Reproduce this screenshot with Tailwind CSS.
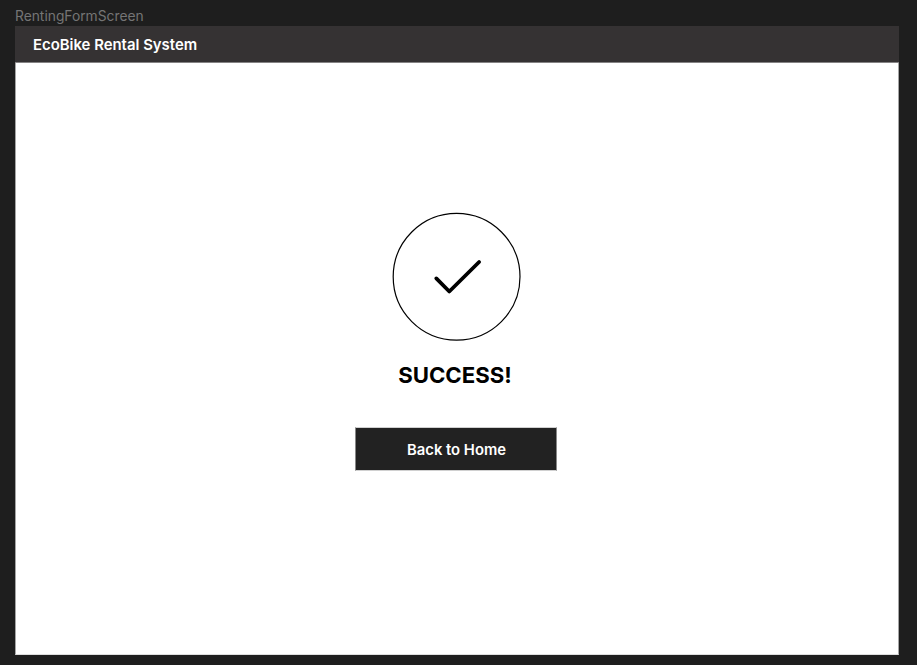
<!DOCTYPE html>
<html lang="en">
<head>
<meta charset="utf-8">
<title>EcoBike Rental System</title>
<script src="https://cdn.jsdelivr.net/npm/@tailwindcss/browser@4"></script>
</head>
<body class="h-[665px] w-[917px] overflow-hidden bg-[#1e1e1e] pl-[15px] font-['Inter',sans-serif]">
<div class="flex h-[26px] items-end pb-[1px] text-[13.8px] leading-[18px] text-[#757575]">RentingFormScreen</div>
<main class="flex h-[629px] w-[884px] flex-col bg-white">
<header class="flex h-[37px] shrink-0 items-center border-b border-[#858384] bg-[#353233] pt-[2px] pl-[18px] text-[14.9px] font-semibold text-white">EcoBike Rental System</header>
<section class="flex grow flex-col items-center border-x border-b border-x-[#a5a5a5] border-b-[#dedede] pt-[149px] pr-[1px]">
<svg class="h-[130px] w-[130px]" viewBox="0 0 130 130" fill="none" stroke="#000"><circle cx="64.6" cy="64.8" r="63.4" stroke-width="1.2"/><path d="M44.3 66.4 57.3 79.5 87.1 50" stroke-width="3.8" stroke-linecap="round" stroke-linejoin="round"/></svg>
<h1 class="mt-[19px] mr-[3px] text-[22.2px] leading-[28px] font-[650] text-black">SUCCESS!</h1>
<button class="mt-[38px] mr-px h-[44px] w-[202px] border border-x-[#888] border-y-[#d0d0d0] bg-[#222] bg-clip-padding pt-[2px] pl-px text-[14.8px] font-semibold text-white">Back to Home</button>
</section>
</main>
</body>
</html>
